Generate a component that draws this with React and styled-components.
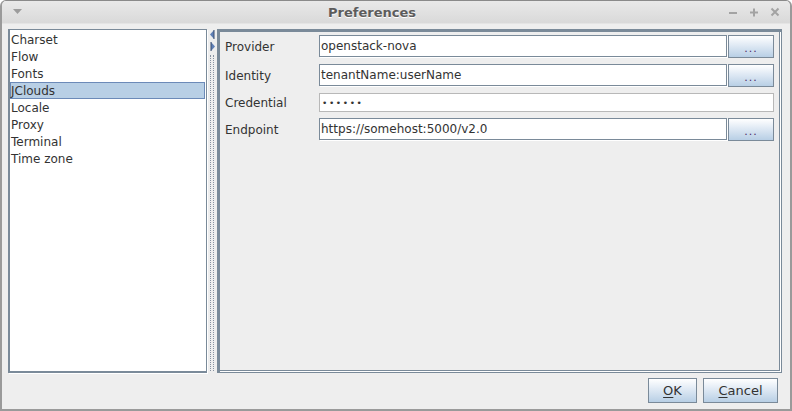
import styled, { createGlobalStyle } from "styled-components";

const GlobalStyle = createGlobalStyle`
  html, body {
    margin: 0;
    padding: 0;
    background: #ffffff;
  }
  * {
    box-sizing: border-box;
  }
`;

const frameBlue = "#7a8a99";
const textColor = "#333333";

const Window = styled.div`
  width: 792px;
  height: 411px;
  display: flex;
  flex-direction: column;
  background: #eeeeee;
  border: 2px solid #9a9a9a;
  border-top: 1px solid #8a8a8a;
  border-radius: 6px 6px 0 0;
  overflow: hidden;
  font-family: "DejaVu Sans", sans-serif;
  font-size: 12px;
  color: ${textColor};
`;

const TitleBar = styled.div`
  height: 23px;
  flex: none;
  display: flex;
  align-items: center;
  padding: 0 10px 0 11px;
  background: linear-gradient(to bottom, #e9e9e9, #d9d9d9);
  border-bottom: 1px solid #e4e4e4;
`;

const TitleText = styled.div`
  flex: 1;
  text-align: center;
  font-weight: bold;
  font-size: 13px;
  color: #5c5c5c;
  text-shadow: 0 1px 0 #ffffff;
  padding-right: 6px;
`;

const TitleControls = styled.div`
  display: flex;
  gap: 11px;
  align-items: center;
`;

const Content = styled.div`
  flex: 1;
  display: flex;
  flex-direction: column;
  padding: 5px 8px 0 6px;
`;

const Main = styled.div`
  height: 344px;
  display: flex;
`;

const ListBox = styled.div`
  width: 199px;
  flex: none;
  background: #ffffff;
  border: 1px solid ${frameBlue};
  border-left-width: 2px;
  border-bottom-width: 2px;
  box-shadow: 1px 1px 0 #ffffff;
  padding: 1px 0 0 0;
`;

const ListItem = styled.div`
  height: 17px;
  line-height: 16px;
  margin: 0 1px 0 0;
  border: 1px solid ${(p) => (p.selected ? "#6c8ab8" : "transparent")};
  background: ${(p) => (p.selected ? "#b8cfe5" : "transparent")};
  white-space: nowrap;
`;

const Splitter = styled.div`
  width: 10px;
  flex: none;
  display: flex;
  flex-direction: column;
  align-items: center;
  padding: 1px 0 2px;
`;

const SplitArrow = styled.svg`
  display: block;
  margin-bottom: 3px;
`;

const Grip = styled.div`
  flex: 1;
  width: 4px;
  border-left: 1px dotted #8791a0;
  border-right: 1px dotted #8791a0;
  margin-top: 1px;
`;

const RightPanel = styled.div`
  flex: 1;
  border-top: 3px solid ${frameBlue};
  border-left: 3px solid ${frameBlue};
  border-right: 1px solid ${frameBlue};
  border-bottom: 1px solid ${frameBlue};
  box-shadow: inset -1px -1px 0 #ffffff, inset -2px -2px 0 ${frameBlue};
  padding: 3px 7px 0 5px;
`;

const Form = styled.div`
  display: grid;
  grid-template-columns: 93px 1fr 46px;
  grid-template-rows: 23px 23px 19px 23px;
  column-gap: 1px;
  row-gap: 6px;
  align-items: start;
`;

const Label = styled.div`
  white-space: nowrap;
  align-self: center;
`;

const TextField = styled.div`
  height: ${(p) => (p.short ? 19 : 22)}px;
  grid-column: ${(p) => (p.wide ? "2 / 4" : "auto")};
  background: #ffffff;
  border: 1px solid ${(p) => (p.muted ? "#b8b8b8" : frameBlue)};
  box-shadow: ${(p) => (p.muted ? "none" : "1px 1px 0 #ffffff")};
  display: flex;
  align-items: center;
  padding-left: 1px;
  white-space: nowrap;
  overflow: hidden;
`;

const Dots = styled.span`
  font-size: 9px;
  letter-spacing: 1.6px;
  padding-left: 1px;
`;

const Button = styled.div`
  height: ${(p) => (p.tall ? 25 : 23)}px;
  width: ${(p) => p.w}px;
  display: flex;
  align-items: center;
  justify-content: center;
  border: 1px solid ${frameBlue};
  background: linear-gradient(to bottom, #ffffff 0%, #dfe9f4 45%, #b8cfe5 100%);
  color: ${(p) => (p.dots ? "#4b2f6b" : textColor)};
  font-size: ${(p) => (p.dots ? 11 : 13)}px;
  letter-spacing: ${(p) => (p.dots ? "1px" : "0")};
  padding-top: ${(p) => (p.dots ? 4 : 0)}px;
  white-space: nowrap;
`;

const Mnemonic = styled.span`
  text-decoration: underline;
  text-underline-offset: 2px;
`;

const BottomBar = styled.div`
  height: 36px;
  display: flex;
  justify-content: flex-end;
  align-items: flex-start;
  gap: 6px;
  padding: 5px 4px 0 0;
`;

const categories = [
  "Charset",
  "Flow",
  "Fonts",
  "JClouds",
  "Locale",
  "Proxy",
  "Terminal",
  "Time zone",
];

const fields = [
  { label: "Provider", value: "openstack-nova", browse: true },
  { label: "Identity", value: "tenantName:userName", browse: true },
  { label: "Credential", secret: true },
  { label: "Endpoint", value: "https://somehost:5000/v2.0", browse: true },
];

const MenuIcon = () => (
  <svg width="9" height="6" viewBox="0 0 9 6">
    <path d="M0 0 L9 0 L4.5 5 Z" fill="#9c9c9c" />
  </svg>
);

const TitleControlIcons = () => (
  <TitleControls>
    <svg width="10" height="10" viewBox="0 0 10 10">
      <path d="M1 6 H9" stroke="#a3a3a3" strokeWidth="2" />
    </svg>
    <svg width="10" height="10" viewBox="0 0 10 10">
      <path d="M1 5.5 H9 M5 1.5 V9.5" stroke="#a3a3a3" strokeWidth="2" />
    </svg>
    <svg width="10" height="10" viewBox="0 0 10 10">
      <path d="M1.5 1.5 L8.5 8.5 M8.5 1.5 L1.5 8.5" stroke="#a3a3a3" strokeWidth="2" />
    </svg>
  </TitleControls>
);

const FormRow = ({ field }) => {
  const { label, value, secret, browse } = field;
  return (
    <>
      <Label>{label}</Label>
      {secret ? (
        <TextField short wide muted>
          <Dots>••••••</Dots>
        </TextField>
      ) : (
        <TextField>{value}</TextField>
      )}
      {browse && (
        <Button dots w={46}>
          ...
        </Button>
      )}
    </>
  );
};

const App = () => {
  return (
    <>
      <GlobalStyle />
      <Window>
        <TitleBar>
          <MenuIcon />
          <TitleText>Preferences</TitleText>
          <TitleControlIcons />
        </TitleBar>
        <Content>
          <Main>
            <ListBox>
              {categories.map((name) => (
                <ListItem key={name} selected={name === "JClouds"}>
                  {name}
                </ListItem>
              ))}
            </ListBox>
            <Splitter>
              <SplitArrow width="5" height="9" viewBox="0 0 5 9">
                <path d="M4 0 L0 4.5 L4 9 Z" fill="#5f7fb5" />
                <path d="M4 0 L4 9" stroke="#3d4f6e" strokeWidth="1" />
              </SplitArrow>
              <SplitArrow width="5" height="9" viewBox="0 0 5 9">
                <path d="M1 0 L5 4.5 L1 9 Z" fill="#5f7fb5" />
                <path d="M1 0 L1 9" stroke="#3d4f6e" strokeWidth="1" />
              </SplitArrow>
              <Grip />
            </Splitter>
            <RightPanel>
              <Form>
                {fields.map((f) => (
                  <FormRow key={f.label} field={f} />
                ))}
              </Form>
            </RightPanel>
          </Main>
          <BottomBar>
            <Button tall w={49}>
              <Mnemonic>O</Mnemonic>K
            </Button>
            <Button tall w={75}>
              <Mnemonic>C</Mnemonic>ancel
            </Button>
          </BottomBar>
        </Content>
      </Window>
    </>
  );
};

export default App;
